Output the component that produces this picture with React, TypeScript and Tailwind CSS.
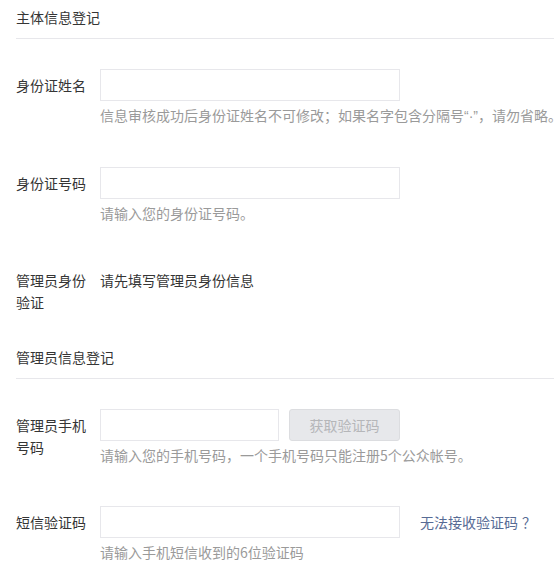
const FONT = "font-['Microsoft_YaHei','Noto_Sans_CJK_SC',sans-serif]"

function SectionTitle({ title, className = "" }: { title: string; className?: string }) {
  return (
    <div className={`border-b border-[#e7e7eb] pt-[7px] pb-[11px] ${className}`}>
      <h3 className="text-[14px] leading-[20px] font-normal text-[#353535]">{title}</h3>
    </div>
  )
}

function FormRow({
  label,
  hint,
  children,
  className = "",
}: {
  label: string
  hint?: React.ReactNode
  children: React.ReactNode
  className?: string
}) {
  return (
    <div className={`flex ${className}`}>
      <label className="mr-[12px] w-[72px] shrink-0 pt-[5px] text-[14px] leading-[22px] text-[#353535]">
        {label}
      </label>
      <div className="flex flex-col">
        {children}
        {hint ? (
          <p className="mt-[4px] whitespace-nowrap text-[14px] leading-[20px] text-[#9a9a9a]">{hint}</p>
        ) : null}
      </div>
    </div>
  )
}

function TextInput({ width = "w-[300px]" }: { width?: string }) {
  return (
    <input
      type="text"
      className={`h-[32px] ${width} border border-[#e7e7eb] bg-white px-[10px] text-[14px] outline-none`}
    />
  )
}

export default function App() {
  return (
    <div className={`min-h-[570px] w-full overflow-hidden bg-white pl-[16px] ${FONT}`}>
      <SectionTitle title="主体信息登记" />

      <FormRow
        label="身份证姓名"
        hint={
          <>
            信息审核成功后身份证姓名不可修改；如果名字包含分隔号
            <span className="font-['Liberation_Sans',sans-serif]">“·”</span>，请勿省略。
          </>
        }
        className="mt-[30px]"
      >
        <TextInput />
      </FormRow>

      <FormRow label="身份证号码" hint="请输入您的身份证号码。" className="mt-[41px]">
        <TextInput />
      </FormRow>

      <FormRow label="管理员身份验证" className="mt-[41px]">
        <p className="pt-[5px] text-[14px] leading-[22px] text-[#353535]">请先填写管理员身份信息</p>
      </FormRow>

      <SectionTitle title="管理员信息登记" className="mt-[27px]" />

      <FormRow
        label="管理员手机号码"
        hint="请输入您的手机号码，一个手机号码只能注册5个公众帐号。"
        className="mt-[30px]"
      >
        <div className="flex gap-[10px]">
          <TextInput width="w-[179px]" />
          <button
            type="button"
            disabled
            className="h-[32px] w-[111px] rounded-[3px] border border-[#dcdde0] bg-[#e7e8eb] text-[14px] text-[#b5b6b9]"
          >
            获取验证码
          </button>
        </div>
      </FormRow>

      <FormRow label="短信验证码" hint="请输入手机短信收到的6位验证码" className="mt-[41px]">
        <div className="flex items-center">
          <TextInput />
          <a href="#" className="ml-[20px] whitespace-nowrap text-[14px] leading-[32px] text-[#576b95]">
            无法接收验证码<span className="ml-[4px]">？</span>
          </a>
        </div>
      </FormRow>
    </div>
  )
}
